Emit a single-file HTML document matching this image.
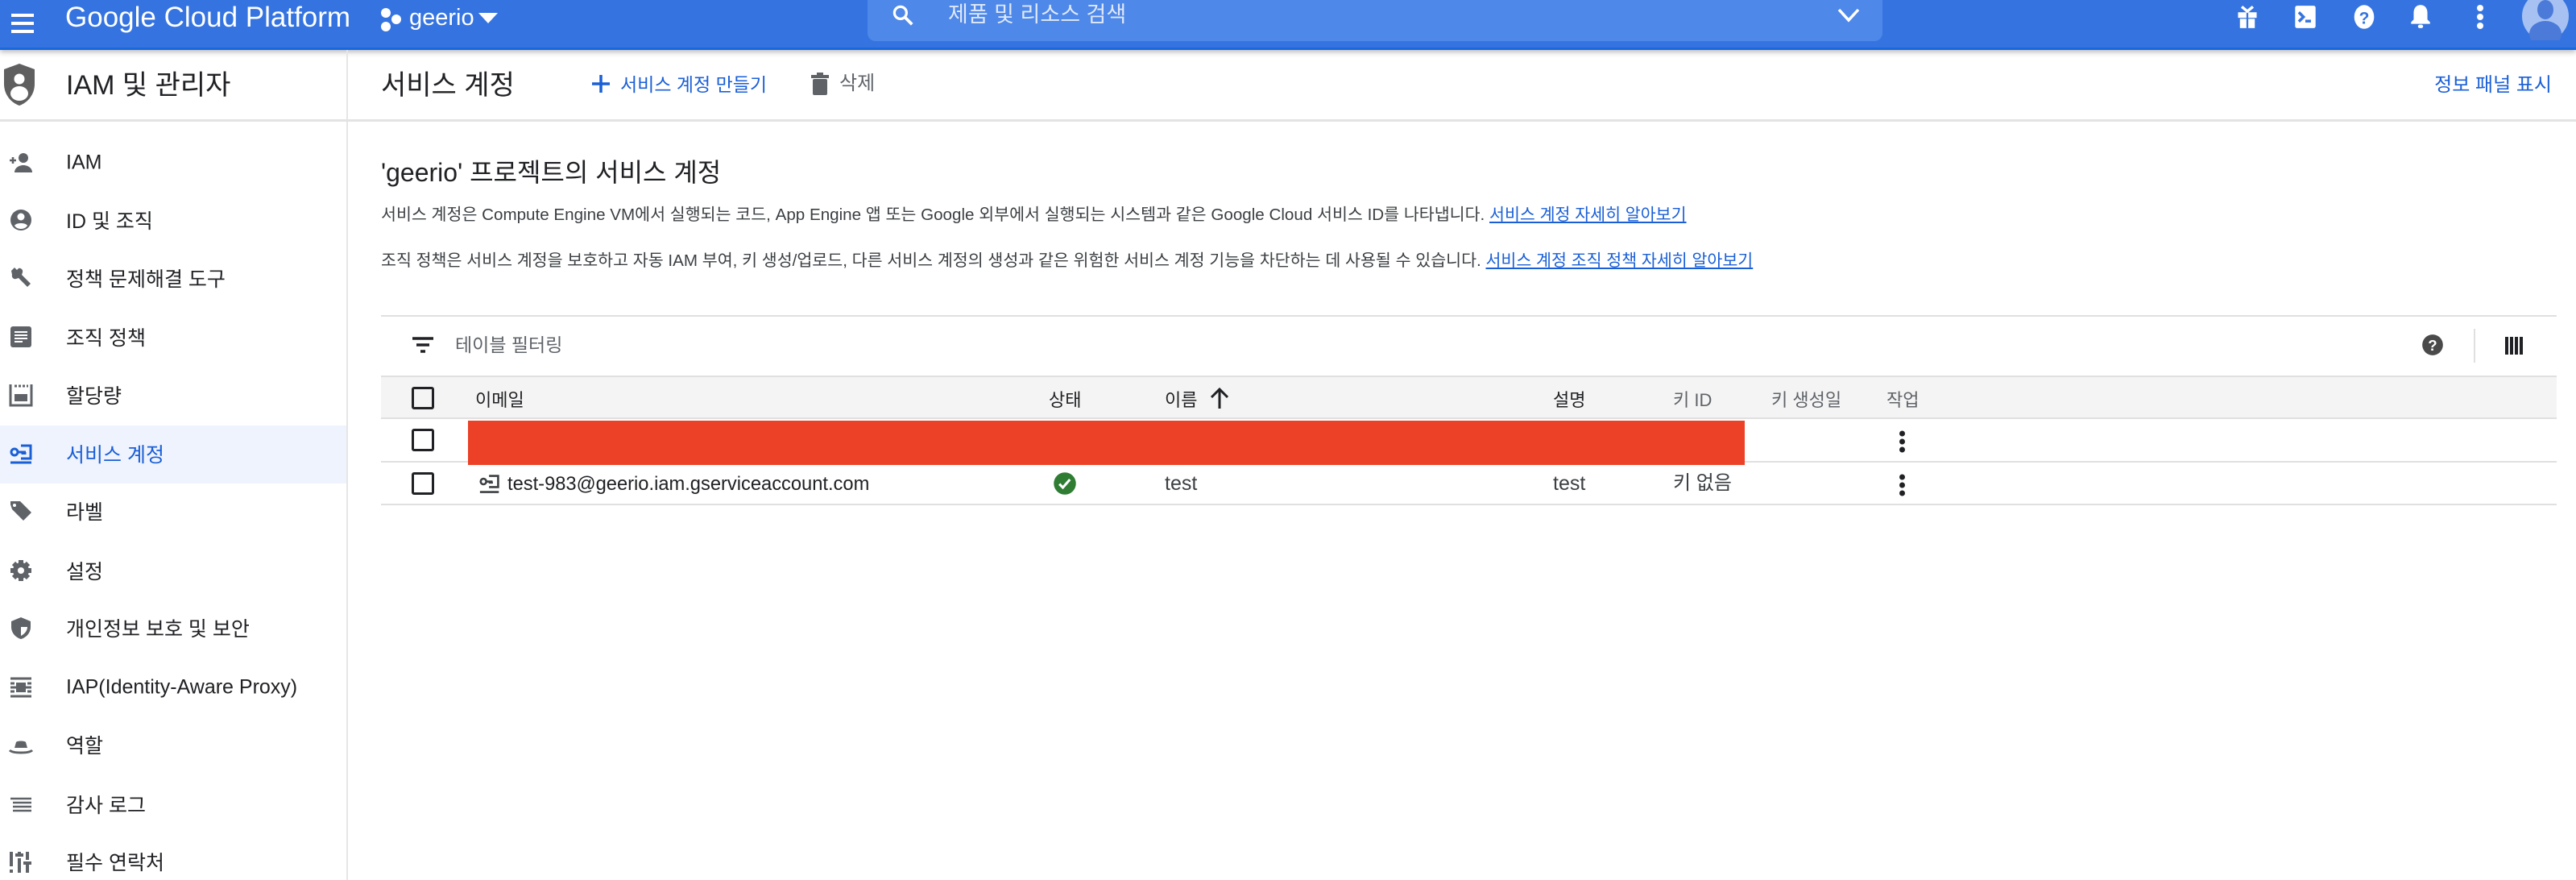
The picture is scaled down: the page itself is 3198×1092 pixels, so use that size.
<!DOCTYPE html>
<html><head><meta charset="utf-8">
<style>
*{margin:0;padding:0;box-sizing:border-box}
body{width:3198px;height:1092px;overflow:hidden;background:#fff;font-family:"Liberation Sans","Noto Sans CJK KR",sans-serif;color:#202124;position:relative}
.a{position:absolute;white-space:nowrap}
.top{position:absolute;left:0;top:0;width:3198px;height:62px;background:#3574e0;border-bottom:3px solid #1a68dc;box-shadow:0 3px 6px rgba(0,0,0,.25)}
.sb{position:absolute;left:430px;top:62px;width:2px;height:1030px;background:#e6e6e6}
.hl{position:absolute;left:0;top:148px;width:3198px;height:3px;background:#e3e3e3}
.nav{position:absolute;left:82px;font-size:25px;color:#202124;transform:translateY(-50%)}
.ic{position:absolute;left:10px;width:32px;height:32px;transform:translateY(-50%)}
.th{font-size:22px;color:#202124}
.cb{position:absolute;left:511px;width:28px;height:28px;border:3px solid #202124;border-radius:3px;transform:translateY(-50%)}
.dots{position:absolute;left:2358px;width:8px;transform:translateY(-50%)}
.dots i{display:block;width:7px;height:7px;border-radius:50%;background:#202124;margin:3px 0}
</style></head><body>

<div class="top"></div>
<div class="a" style="left:14px;top:17px;width:28px;height:4px;background:#fff"></div>
<div class="a" style="left:14px;top:27px;width:28px;height:4px;background:#fff"></div>
<div class="a" style="left:14px;top:37px;width:28px;height:4px;background:#fff"></div>
<div class="a" style="left:81px;top:2px;font-size:35px;color:#fff;line-height:40px">Google Cloud Platform</div>
<svg class="a" style="left:470px;top:8px" width="30" height="32" viewBox="0 0 30 32"><circle cx="9" cy="8" r="6" fill="#fff"/><circle cx="22" cy="16" r="6" fill="#fff"/><circle cx="9" cy="25" r="6" fill="#fff"/></svg>
<div class="a" style="left:508px;top:4px;font-size:29px;color:#fff;line-height:36px">geerio</div>
<svg class="a" style="left:594px;top:16px" width="24" height="14"><path d="M0 0H24L12 13Z" fill="#fff"/></svg>
<div class="a" style="left:1077px;top:0;width:1260px;height:51px;background:#4e88e8;border-radius:0 0 10px 10px"></div>
<svg class="a" style="left:1106px;top:4px" width="30" height="30" viewBox="0 0 24 24"><circle cx="9.5" cy="9.5" r="6" stroke="#fff" stroke-width="2.6" fill="none"/><path d="M14 14L21 21" stroke="#fff" stroke-width="3"/></svg>
<div class="a" style="left:1177px;top:1px;font-size:27px;color:#dfe8f8;line-height:34px">제품 및 리소스 검색</div>
<svg class="a" style="left:2280px;top:8px" width="30" height="22"><path d="M3 4L15 17L27 4" stroke="#fff" stroke-width="3.5" fill="none"/></svg>
<svg class="a" style="left:2776px;top:6px" width="28" height="30" viewBox="0 0 24 26"><rect x="2" y="8" width="20" height="6" fill="#fff"/><rect x="4" y="15" width="16" height="10" fill="#fff"/><rect x="11" y="8" width="2" height="17" fill="#3574e0"/><path d="M6 2l6 5 6-5" stroke="#fff" stroke-width="3" fill="none"/></svg>
<svg class="a" style="left:2848px;top:6px" width="28" height="30" viewBox="0 0 24 26"><rect x="1" y="1" width="22" height="24" rx="2" fill="#fff"/><path d="M5 8l5 5-5 5" stroke="#3574e0" stroke-width="3" fill="none"/><rect x="12" y="16" width="6" height="3" fill="#3574e0"/></svg>
<svg class="a" style="left:2920px;top:5px" width="30" height="32" viewBox="0 0 24 26"><ellipse cx="12" cy="13" rx="10" ry="12" fill="#fff"/><text x="12" y="20" font-size="17" font-weight="bold" text-anchor="middle" fill="#3574e0" font-family="Liberation Sans">?</text></svg>
<svg class="a" style="left:2992px;top:4px" width="26" height="32" viewBox="0 0 24 30"><path d="M12 2c-5 0-8 4-8 9v8l-3 3v2h22v-2l-3-3v-8c0-5-3-9-8-9z" fill="#fff"/><rect x="9" y="25" width="6" height="4" rx="2" fill="#fff"/></svg>
<svg class="a" style="left:3074px;top:6px" width="10" height="30"><circle cx="5" cy="4" r="4" fill="#fff"/><circle cx="5" cy="15" r="4" fill="#fff"/><circle cx="5" cy="26" r="4" fill="#fff"/></svg>
<svg class="a" style="left:3130px;top:-4px" width="60" height="54" viewBox="0 0 60 54"><ellipse cx="30" cy="24" rx="29" ry="30" fill="#a7c2f2"/><ellipse cx="30" cy="16" rx="10" ry="12" fill="#4b7ad8"/><ellipse cx="30" cy="46" rx="20" ry="16" fill="#4b7ad8"/></svg>

<div class="sb"></div>
<div class="hl"></div>

<svg class="a" style="left:3px;top:78px" width="42" height="54" viewBox="0 0 42 54"><path d="M21 1L2 8v18c0 13 8 23 19 27 11-4 19-14 19-27V8z" fill="#5f5f5f"/><circle cx="21" cy="20" r="6.5" fill="#fff"/><ellipse cx="21" cy="38" rx="11" ry="9" fill="#fff"/></svg>
<div class="a" style="left:82px;top:86px;font-size:34px;line-height:40px">IAM 및 관리자</div>

<div class="a" style="left:0;top:528px;width:430px;height:72px;background:#eef3fd"></div>
<svg class="ic" style="top:202px" viewBox="0 0 32 32"><path d="M2 13h8M6 9v8" stroke="#5f6368" stroke-width="2.6"/><circle cx="19" cy="10" r="6" fill="#5f6368"/><path d="M8 28c0-6 6-9 11-9s11 3 11 9z" fill="#5f6368"/></svg>
<div class="nav" style="top:202px">IAM</div>
<svg class="ic" style="top:273px" viewBox="0 0 32 32"><circle cx="16" cy="16" r="13" fill="#5f6368"/><circle cx="16" cy="12" r="4.5" fill="#fff"/><path d="M8 23c2-4 14-4 16 0c-2 3-5 4-8 4s-6-1-8-4z" fill="#fff"/></svg>
<div class="nav" style="top:273px">ID 및 조직</div>
<svg class="ic" style="top:345px" viewBox="0 0 32 32"><path d="M4 7l4-4 3 3 2-2c3-1 6 2 5 5l-1 3 11 11-4 4-11-11-3 1c-3 1-6-2-5-5z" fill="#5f6368"/></svg>
<div class="nav" style="top:345px">정책 문제해결 도구</div>
<svg class="ic" style="top:418px" viewBox="0 0 32 32"><rect x="3" y="3" width="26" height="26" rx="3" fill="#5f6368"/><path d="M8 10h16M8 14h16M8 18h16M8 22h10" stroke="#fff" stroke-width="2"/></svg>
<div class="nav" style="top:418px">조직 정책</div>
<svg class="ic" style="top:490px" viewBox="0 0 32 32"><path d="M3 3v26h26V3" stroke="#5f6368" stroke-width="3" fill="none"/><rect x="8" y="15" width="16" height="9" fill="#5f6368"/><path d="M8 5h3M13 5h3M18 5h3M23 5h2" stroke="#5f6368" stroke-width="3"/></svg>
<div class="nav" style="top:490px">할당량</div>
<svg class="ic" style="top:563px" viewBox="0 0 32 32"><circle cx="8" cy="14" r="4" stroke="#1a5fd6" stroke-width="3" fill="none"/><path d="M12 14h10M18 14v3M21 14v3M16 6h12v16H16M3 27h26" stroke="#1a5fd6" stroke-width="3" fill="none"/></svg>
<div class="nav" style="top:563px;color:#1a5fd6">서비스 계정</div>
<svg class="ic" style="top:634px" viewBox="0 0 32 32"><path d="M3 8V4h12l14 14-10 10L5 14z" fill="#5f6368"/><circle cx="8" cy="9" r="2" fill="#fff"/></svg>
<div class="nav" style="top:634px">라벨</div>
<svg class="ic" style="top:708px" viewBox="0 0 32 32"><circle cx="16" cy="16" r="10" fill="#5f6368"/><g stroke="#5f6368" stroke-width="6"><path d="M16 3v26M3 16h26M7 7l18 18M25 7L7 25"/></g><circle cx="16" cy="16" r="4" fill="#fff"/></svg>
<div class="nav" style="top:708px">설정</div>
<svg class="ic" style="top:779px" viewBox="0 0 32 32"><path d="M16 3L4 8v7c0 7 5 13 12 15 7-2 12-8 12-15V8z" fill="#5f6368"/><path d="M16 7v19c4-2 8-6 8-11h-8z" fill="#fff"/></svg>
<div class="nav" style="top:779px">개인정보 보호 및 보안</div>
<svg class="ic" style="top:853px" viewBox="0 0 32 32"><path d="M3 5h26M3 27h26M3 11h5M24 11h5M3 21h5M24 21h5" stroke="#5f6368" stroke-width="3"/><rect x="10" y="10" width="12" height="12" fill="#5f6368"/><path d="M3 16h26" stroke="#5f6368" stroke-width="3"/></svg>
<div class="nav" style="top:853px">IAP(Identity-Aware Proxy)</div>
<svg class="ic" style="top:924px" viewBox="0 0 32 32"><path d="M8 20l2-7c1-2 11-2 12 0l2 7z" fill="#5f6368"/><path d="M2 23c4 4 24 4 28 0" stroke="#5f6368" stroke-width="3" fill="none"/></svg>
<div class="nav" style="top:924px">역할</div>
<svg class="ic" style="top:998px" viewBox="0 0 32 32"><path d="M3 9h26M6 14h23M6 19h23M6 24h23" stroke="#5f6368" stroke-width="2.5"/></svg>
<div class="nav" style="top:998px">감사 로그</div>
<svg class="ic" style="top:1069px" viewBox="0 0 32 32"><path d="M4 4v18M4 26v4M14 4v4M14 12v18M24 4v10M24 18v12M9 8h10M19 18h10" stroke="#5f6368" stroke-width="4"/></svg>
<div class="nav" style="top:1069px">필수 연락처</div>

<div class="a" style="left:473px;top:86px;font-size:34px;line-height:40px">서비스 계정</div>
<svg class="a" style="left:734px;top:92px" width="24" height="24"><path d="M12 1v22M1 12h22" stroke="#1a5fd6" stroke-width="3.5"/></svg>
<div class="a" style="left:770px;top:89px;font-size:23px;line-height:32px;color:#1a5fd6">서비스 계정 만들기</div>
<svg class="a" style="left:1006px;top:90px" width="24" height="28" viewBox="0 0 24 28"><rect x="1" y="3" width="22" height="4" fill="#5f6368"/><rect x="8" y="0" width="8" height="4" fill="#5f6368"/><rect x="3" y="8" width="18" height="20" rx="2" fill="#5f6368"/></svg>
<div class="a" style="left:1042px;top:88px;font-size:24px;line-height:32px;color:#5f6368">삭제</div>
<div class="a" style="right:30px;top:90px;font-size:24px;line-height:32px;color:#1a5fd6">정보 패널 표시</div>

<div class="a" style="left:473px;top:194px;font-size:32px;line-height:40px">'geerio' 프로젝트의 서비스 계정</div>
<div class="a" style="left:473px;top:253px;font-size:20.6px;line-height:28px;color:#3c4043">서비스 계정은 Compute Engine VM에서 실행되는 코드, App Engine 앱 또는 Google 외부에서 실행되는 시스템과 같은 Google Cloud 서비스 ID를 나타냅니다. <span style="color:#1a5fd6;text-decoration:underline">서비스 계정 자세히 알아보기</span></div>
<div class="a" style="left:473px;top:310px;font-size:20.6px;line-height:28px;color:#3c4043">조직 정책은 서비스 계정을 보호하고 자동 IAM 부여, 키 생성/업로드, 다른 서비스 계정의 생성과 같은 위험한 서비스 계정 기능을 차단하는 데 사용될 수 있습니다. <span style="color:#1a5fd6;text-decoration:underline">서비스 계정 조직 정책 자세히 알아보기</span></div>

<div class="a" style="left:473px;top:391px;width:2701px;height:2px;background:#e0e0e0"></div>
<svg class="a" style="left:512px;top:418px" width="26" height="20"><path d="M0 2h26M5 10h16M10 18h6" stroke="#202124" stroke-width="3.5"/></svg>
<div class="a" style="left:565px;top:412px;font-size:23px;line-height:32px;color:#5f6368">테이블 필터링</div>
<svg class="a" style="left:3006px;top:414px" width="28" height="28" viewBox="0 0 24 24"><circle cx="12" cy="12" r="11" fill="#4a4a4a"/><text x="12" y="18" font-size="16" font-weight="bold" text-anchor="middle" fill="#fff" font-family="Liberation Sans">?</text></svg>
<div class="a" style="left:3071px;top:408px;width:2px;height:42px;background:#e0e0e0"></div>
<svg class="a" style="left:3110px;top:418px" width="22" height="22"><path d="M2 0v22M8 0v22M14 0v22M20 0v22" stroke="#202124" stroke-width="4"/></svg>

<div class="a" style="left:473px;top:466px;width:2701px;height:54px;background:#f4f4f4;border-top:2px solid #e0e0e0;border-bottom:2px solid #e0e0e0"></div>
<div class="cb" style="top:494px"></div>
<div class="a th" style="left:590px;top:479px">이메일</div>
<div class="a th" style="left:1302px;top:479px">상태</div>
<div class="a th" style="left:1446px;top:479px">이름</div>
<svg class="a" style="left:1502px;top:480px" width="24" height="28"><path d="M12 27V3M2 13L12 3l10 10" stroke="#202124" stroke-width="3" fill="none"/></svg>
<div class="a th" style="left:1928px;top:479px">설명</div>
<div class="a th" style="left:2077px;top:479px;color:#5f6368">키 ID</div>
<div class="a th" style="left:2199px;top:479px;color:#5f6368">키 생성일</div>
<div class="a th" style="left:2342px;top:479px;color:#5f6368">작업</div>

<div class="a" style="left:473px;top:572px;width:2701px;height:2px;background:#e0e0e0"></div>
<div class="a" style="left:473px;top:625px;width:2701px;height:2px;background:#e0e0e0"></div>
<div class="cb" style="top:546px"></div>
<div class="a" style="left:581px;top:522px;width:1585px;height:55px;background:#ec4126"></div>
<div class="dots" style="top:548px"><i></i><i></i><i></i></div>

<div class="cb" style="top:600px"></div>
<svg class="a" style="left:594px;top:588px" width="28" height="26" viewBox="0 0 32 30"><circle cx="7" cy="11" r="4" stroke="#3c4043" stroke-width="3" fill="none"/><path d="M11 11h9M16 11v3M19 11v3M15 3h13v16H15M2 26h27" stroke="#3c4043" stroke-width="3" fill="none"/></svg>
<div class="a" style="left:630px;top:585px;font-size:23.7px;line-height:32px">test-983@geerio.iam.gserviceaccount.com</div>
<svg class="a" style="left:1307px;top:585px" width="30" height="30" viewBox="0 0 24 24"><circle cx="12" cy="12" r="11" fill="#2e7d32"/><path d="M6.5 12.5l3.5 3.5 7-8" stroke="#fff" stroke-width="2.5" fill="none"/></svg>
<div class="a" style="left:1446px;top:584px;font-size:25px;line-height:32px;color:#3c4043">test</div>
<div class="a" style="left:1928px;top:584px;font-size:25px;line-height:32px;color:#3c4043">test</div>
<div class="a" style="left:2077px;top:584px;font-size:24px;line-height:32px;color:#3c4043">키 없음</div>
<div class="dots" style="top:602px"><i></i><i></i><i></i></div>

</body></html>
